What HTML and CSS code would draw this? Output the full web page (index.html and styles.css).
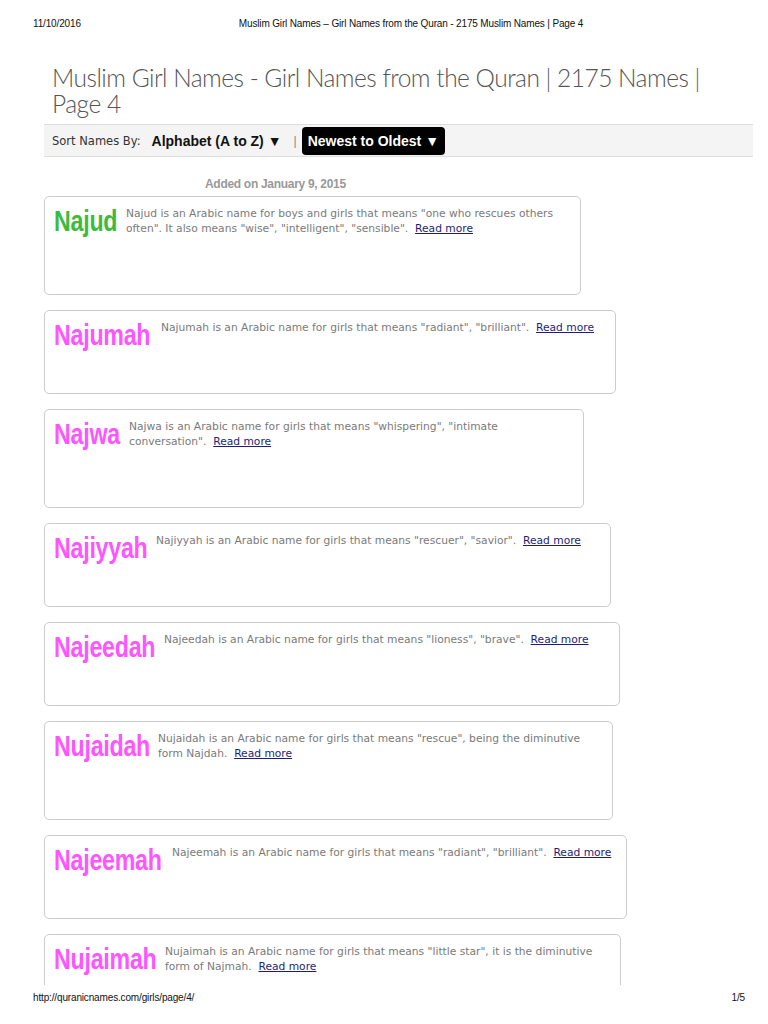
FILE: index.html
```html
<!DOCTYPE html>
<html lang="en">

<head>
    <meta charset="UTF-8">
    <meta name="viewport" content="width=device-width, initial-scale=1.0">
    <title>Muslim Girl Names – Girl Names from the Quran - 2175 Muslim Names | Page 4</title>
    <link rel="stylesheet" href="styles.css">
</head>

<body>
    <header class="print-head">
        <span class="print-date">11/10/2016</span>
        <span class="print-title">Muslim Girl Names – Girl Names from the Quran - 2175 Muslim Names | Page 4</span>
    </header>

    <div class="sheet">
        <h1 class="page-title">Muslim Girl Names - Girl Names from the Quran | 2175 Names | Page 4</h1>

        <div class="sort-bar">
            <span class="sort-label">Sort Names By:</span>
            <a class="sort-option" href="#">Alphabet (A to Z) ▼</a>
            <span class="sort-sep">|</span>
            <a class="sort-option active" href="#">Newest to Oldest ▼</a>
        </div>

        <div class="added">Added on January 9, 2015</div>

        <div class="name-list">
            <div class="name-card">
                <div class="name-word boy"><span>Najud</span></div>
                <p class="name-desc">Najud is an Arabic name for boys and girls that means "one who rescues others often". It also means "wise", "intelligent", "sensible".&nbsp; <a href="#">Read more</a></p>
            </div>
            <div class="name-card">
                <div class="name-word"><span>Najumah</span></div>
                <p class="name-desc">Najumah is an Arabic name for girls that means "radiant", "brilliant".&nbsp; <a href="#">Read more</a></p>
            </div>
            <div class="name-card">
                <div class="name-word"><span>Najwa</span></div>
                <p class="name-desc">Najwa is an Arabic name for girls that means "whispering", "intimate conversation".&nbsp; <a href="#">Read more</a></p>
            </div>
            <div class="name-card">
                <div class="name-word"><span>Najiyyah</span></div>
                <p class="name-desc">Najiyyah is an Arabic name for girls that means "rescuer", "savior".&nbsp; <a href="#">Read more</a></p>
            </div>
            <div class="name-card">
                <div class="name-word"><span>Najeedah</span></div>
                <p class="name-desc">Najeedah is an Arabic name for girls that means "lioness", "brave".&nbsp; <a href="#">Read more</a></p>
            </div>
            <div class="name-card">
                <div class="name-word"><span>Nujaidah</span></div>
                <p class="name-desc">Nujaidah is an Arabic name for girls that means "rescue", being the diminutive form Najdah.&nbsp; <a href="#">Read more</a></p>
            </div>
            <div class="name-card">
                <div class="name-word"><span>Najeemah</span></div>
                <p class="name-desc">Najeemah is an Arabic name for girls that means "radiant", "brilliant".&nbsp; <a href="#">Read more</a></p>
            </div>
            <div class="name-card">
                <div class="name-word"><span>Nujaimah</span></div>
                <p class="name-desc">Nujaimah is an Arabic name for girls that means "little star", it is the diminutive form of Najmah.&nbsp; <a href="#">Read more</a></p>
            </div>
        </div>
    </div>

    <footer class="print-foot">
        <span>http://quranicnames.com/girls/page/4/</span>
        <span>1/5</span>
    </footer>
</body>

</html>
```

FILE: styles.css
```css
body {
    margin: 0;
    background: #fff;
    font-family: 'Liberation Sans', Arial, sans-serif;
    color: #333;
}

/* print header / footer */
.print-head,
.print-foot {
    display: flex;
    font-size: 10px;
    letter-spacing: -0.15px;
    color: #111;
    padding: 0 23px 0 33px;
}

.print-head {
    height: 40px;
    padding-top: 18px;
    box-sizing: border-box;
    gap: 158px;
}

.print-foot {
    justify-content: space-between;
    padding-top: 7px;
}

.sheet {
    height: 945px;
    overflow: hidden;
    padding-left: 44px;
}

.page-title {
    font-family: Lato, 'Open Sans', sans-serif;
    font-weight: 300;
    font-size: 24.5px;
    letter-spacing: -0.5px;
    line-height: 26px;
    color: #555;
    width: 680px;
    margin: 25px 0 7px 8px;
}

.sort-bar {
    width: 709px;
    box-sizing: border-box;
    height: 33px;
    display: flex;
    align-items: center;
    padding-left: 8px;
    background-color: #f4f4f4;
    border-top: 1px solid #ddd;
    border-bottom: 1px solid #ddd;
}

.sort-label {
    font-family: 'DejaVu Sans', sans-serif;
    font-size: 11.5px;
    color: #333;
    margin-right: 11px;
}

.sort-option {
    font-weight: bold;
    font-size: 14px;
    color: #111;
    text-decoration: none;
}

.sort-sep {
    color: #888;
    font-size: 12px;
    margin: 0 5px 0 12px;
}

.sort-option.active {
    background-color: #000;
    color: #fff;
    border-radius: 4px;
    padding: 6px 6px;
}

.added {
    font-size: 12px;
    font-weight: bold;
    letter-spacing: -0.3px;
    color: #999;
    margin: 20px 0 5px 161px;
}

.name-card {
    box-sizing: border-box;
    border: 1px solid #ccc;
    border-radius: 5px;
    padding: 9px 12px 0 9px;
    margin-bottom: 15px;
}

.name-card:nth-child(1) { width: 537px; }
.name-card:nth-child(2) { width: 572px; }
.name-card:nth-child(3) { width: 540px; }
.name-card:nth-child(4) { width: 567px; }
.name-card:nth-child(5) { width: 576px; }
.name-card:nth-child(6) { width: 569px; }
.name-card:nth-child(7) { width: 583px; }
.name-card:nth-child(8) { width: 577px; }

/* names are set in a narrow bold face: squeeze the glyphs, keep the box */
.name-word {
    float: left;
    height: 34px;
    margin: 0 8px 0 0;
    white-space: nowrap;
}

.name-word span {
    display: inline-block;
    font-weight: bold;
    font-size: 29px;
    line-height: 30px;
    letter-spacing: -0.3px;
    color: #ff55ff;
    transform: scaleX(0.8);
    transform-origin: left top;
}

.name-word.boy span {
    color: #3dbb3d;
}

.name-card:nth-child(1) .name-word { width: 64px; }
.name-card:nth-child(2) .name-word { width: 99px; }
.name-card:nth-child(3) .name-word { width: 67px; }
.name-card:nth-child(4) .name-word { width: 94px; }
.name-card:nth-child(5) .name-word { width: 102px; }
.name-card:nth-child(6) .name-word { width: 96px; }
.name-card:nth-child(7) .name-word { width: 110px; }
.name-card:nth-child(8) .name-word { width: 103px; }

.name-desc {
    font-family: 'DejaVu Sans', Verdana, sans-serif;
    font-size: 10.7px;
    line-height: 15px;
    color: #7a7a7a;
    margin: 0 0 58px;
}

.name-desc a {
    color: #1e1e78;
    text-decoration: underline;
}
```
